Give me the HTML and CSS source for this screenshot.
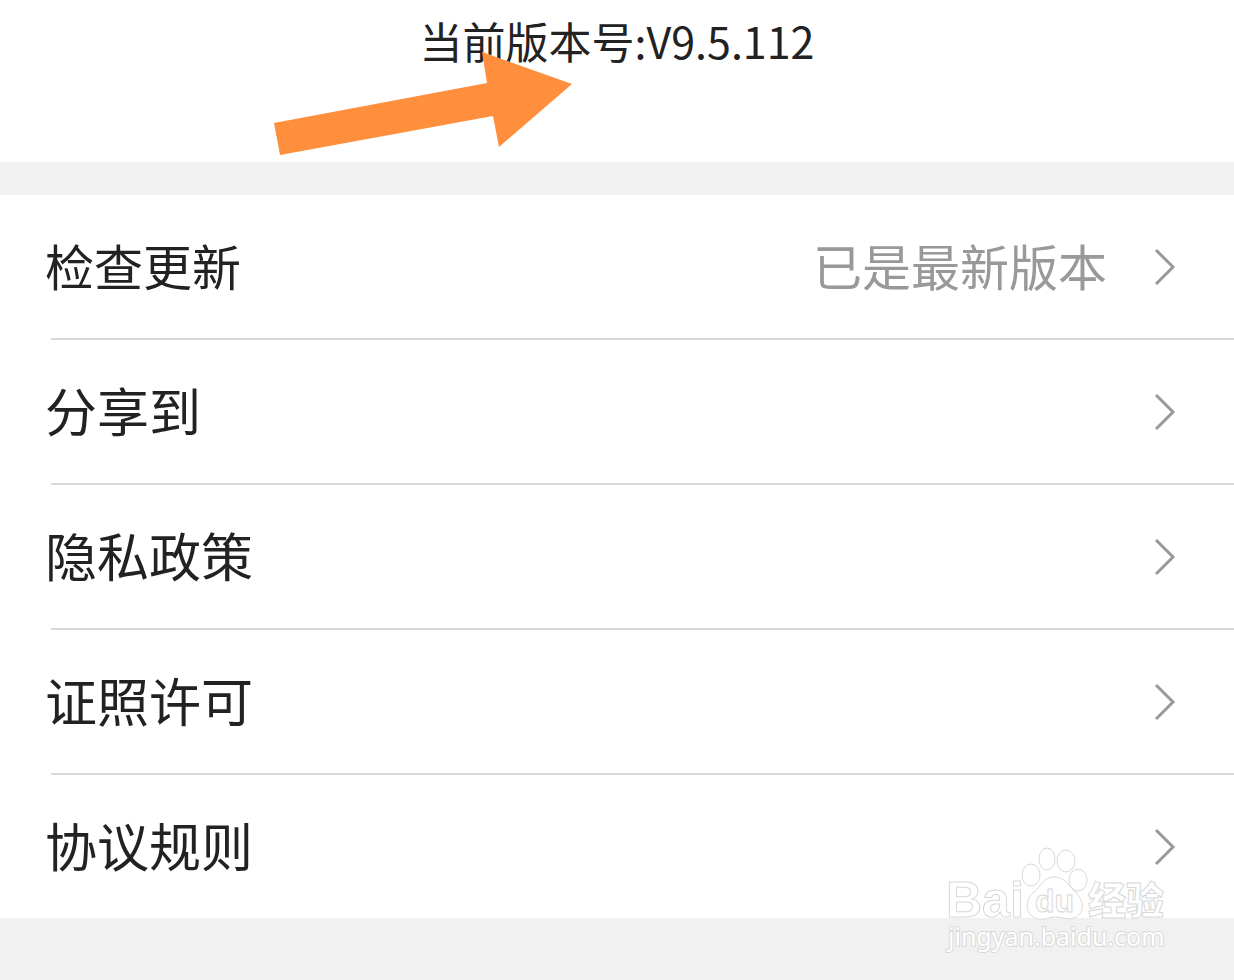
FILE: index.html
```html
<!DOCTYPE html>
<html lang="zh-CN">
<head>
<meta charset="utf-8">
<meta name="viewport" content="width=device-width, initial-scale=1">
<title>当前版本号</title>
<link rel="stylesheet" href="styles.css">
</head>
<body>
<header class="version">
  <h1 class="version-text">当前版本号:V9.5.112</h1>
  <svg class="arrow" width="300" height="106" viewBox="0 0 300 106" aria-hidden="true">
    <path fill="#ff8f3d" d="M2 73 L215 33 L210 2 L300 34 L227 97 L221 66 L8 105 Z"/>
  </svg>
</header>
<main class="menu">
  <ul class="list">
    <li class="item"><a class="row row-update" href="#update"><span class="label">检查更新</span><span class="value">已是最新版本</span><svg class="chevron" viewBox="0 0 22 40" aria-hidden="true"><path d="M2 3 L19 20 L2 37"/></svg></a></li>
    <li class="item"><a class="row" href="#share"><span class="label">分享到</span><svg class="chevron" viewBox="0 0 22 40" aria-hidden="true"><path d="M2 3 L19 20 L2 37"/></svg></a></li>
    <li class="item"><a class="row" href="#privacy"><span class="label">隐私政策</span><svg class="chevron" viewBox="0 0 22 40" aria-hidden="true"><path d="M2 3 L19 20 L2 37"/></svg></a></li>
    <li class="item"><a class="row" href="#license"><span class="label">证照许可</span><svg class="chevron" viewBox="0 0 22 40" aria-hidden="true"><path d="M2 3 L19 20 L2 37"/></svg></a></li>
    <li class="item"><a class="row" href="#rules"><span class="label">协议规则</span><svg class="chevron" viewBox="0 0 22 40" aria-hidden="true"><path d="M2 3 L19 20 L2 37"/></svg></a></li>
  </ul>
</main>
<footer class="footer">
  <svg class="watermark" width="226" height="112" viewBox="0 0 226 112" role="img" aria-label="Baidu 经验 jingyan.baidu.com">
    <g class="mark">
      <text class="brand" x="3" y="73">Bai</text>
      <ellipse cx="88" cy="31" rx="9" ry="11"/>
      <ellipse cx="104" cy="15" rx="8" ry="11"/>
      <ellipse cx="123" cy="17" rx="9" ry="11"/>
      <ellipse cx="135" cy="36" rx="9" ry="11"/>
      <path d="M111 33 C101 33 98 42 91 48 C81 56 82 72 95 75 C103 76 106 73 112 73 C119 73 125 76 131 74 C141 70 142 58 134 50 C126 42 122 33 111 33 Z"/>
      <text class="paw-text" x="92" y="68">du</text>
      <text class="brand-cn" x="145" y="70">经验</text>
    </g>
    <text class="site" x="5" y="102">jingyan.baidu.com</text>
  </svg>
</footer>
</body>
</html>
```
FILE: styles.css
```css
* {
  box-sizing: border-box;
}

body {
  display: flex;
  flex-direction: column;
  min-height: 100vh;
  margin: 0;
  background: #f1f1f1;
  color: #222;
  font-family: "Noto Sans CJK SC", sans-serif;
}

.version {
  position: relative;
  height: 162px;
  padding-top: 10px;
  background: #fff;
}

.version-text {
  margin: 0;
  font-size: 43px;
  font-weight: 400;
  line-height: 60px;
  text-align: center;
}

.arrow {
  position: absolute;
  top: 50px;
  left: calc(50% - 345px);
}

.menu {
  margin-top: 33px;
  background: #fff;
}

.list {
  margin: 0;
  padding: 0;
  list-style: none;
}

.item + .item::before {
  content: "";
  display: block;
  height: 2px;
  margin-left: 51px;
  background: #dadada;
}

.row {
  display: flex;
  align-items: center;
  height: 143px;
  padding: 0 58px 0 45px;
  color: inherit;
  font-size: 52px;
  line-height: 76px;
  text-decoration: none;
}

.row-update {
  font-size: 49px;
}

.label,
.value {
  padding-bottom: 4px;
}

.label {
  flex: 1;
}

.value {
  margin-right: 47px;
  color: #999;
}

.chevron {
  width: 22px;
  height: 40px;
  fill: none;
  stroke: #999;
  stroke-width: 3;
}

.footer {
  position: relative;
  flex: 1;
  min-height: 62px;
}

.watermark {
  position: absolute;
  top: -74px;
  right: 65px;
}

.mark {
  fill: #fff;
  stroke: #d8d8d8;
  stroke-width: 1;
}

.brand {
  font: 700 50px "Liberation Sans", sans-serif;
}

.paw-text {
  font: 700 32px "Liberation Sans", sans-serif;
}

.brand-cn {
  font: 900 38px "Noto Sans CJK SC", sans-serif;
}

.site {
  fill: #fff;
  stroke: #d8d8d8;
  stroke-width: 2;
  paint-order: stroke;
  font: 400 25px "Noto Sans", sans-serif;
}
```
